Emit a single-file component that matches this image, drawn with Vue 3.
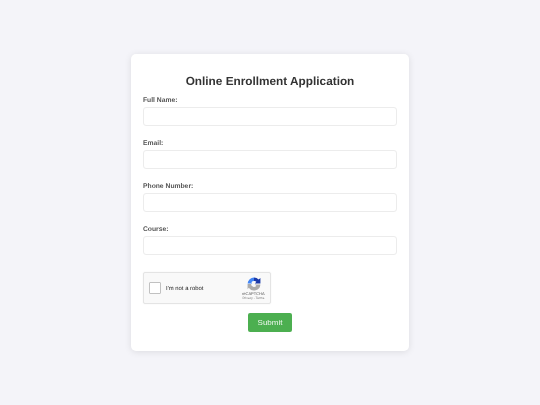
<template>
  <div class="page">
    <form class="card" @submit.prevent>
      <h1 class="title">Online Enrollment Application</h1>
      <div v-for="field in fields" :key="field" class="field">
        <label class="label">{{ field }}:</label>
        <input class="input" type="text" />
      </div>
      <div class="captcha">
        <span class="check"></span>
        <span class="robot">I'm not a robot</span>
        <div class="brand">
          <svg class="logo" viewBox="0 0 24 24" width="14" height="14">
            <path d="M12 1A11 11 0 0 1 20 4.4L23 1.5V11H13.5L16 8A5 5 0 0 0 12 7z" fill="#1c3aa9" />
            <path d="M12 1A11 11 0 0 0 1 11H9L7.5 9A6 6 0 0 1 12 7z" fill="#4285f4" />
            <path d="M1 12H7A5 5 0 0 0 16 15L13 13H23A11 11 0 0 1 3 18.5L1 21z" fill="#ababab" />
          </svg>
          <span class="name">reCAPTCHA</span>
          <span class="terms">Privacy - Terms</span>
        </div>
      </div>
      <button class="submit" type="submit"><span class="submit-text">Submit</span></button>
    </form>
  </div>
</template>

<script setup>
const fields = ['Full Name', 'Email', 'Phone Number', 'Course']
</script>

<style scoped>
.page {
  min-height: 405px;
  display: flex;
  align-items: center;
  justify-content: center;
  background: #f4f4f9;
  font-family: 'Liberation Sans', Arial, sans-serif;
  text-rendering: geometricPrecision;
}
.card {
  width: 254px;
  padding: 20px 12px 19px;
  background: #fff;
  border-radius: 5px;
  box-shadow: 0 1px 7px rgba(0, 0, 0, 0.1);
  display: flex;
  flex-direction: column;
}
.title {
  margin: 0 0 8px;
  font-size: 11.8px;
  line-height: 15px;
  font-weight: bold;
  color: #333;
  text-align: center;
  will-change: transform;
}
.field {
  display: flex;
  flex-direction: column;
  margin-bottom: 14px;
}
.label {
  font-size: 6.75px;
  line-height: 8px;
  font-weight: bold;
  color: #555;
  margin-bottom: 2px;
  will-change: transform;
}
.input {
  box-sizing: border-box;
  width: 100%;
  height: 19px;
  margin: 0;
  padding: 0 7px;
  border: 1px solid #ececec;
  border-radius: 3px;
  background: #fff;
  outline: none;
}
.captcha {
  box-sizing: border-box;
  width: 128px;
  height: 32px;
  margin: 3px 0 9px;
  padding: 0 5px;
  display: flex;
  align-items: center;
  background: #f9f9f9;
  border: 1px solid #e4e4e4;
  border-radius: 2px;
  box-shadow: 0 0 2px rgba(0, 0, 0, 0.06);
}
.check {
  box-sizing: border-box;
  width: 12px;
  height: 12px;
  background: #fff;
  border: 1px solid #c1c1c1;
  border-radius: 1px;
  flex: none;
}
.robot {
  margin: 1px 0 0 5px;
  font-size: 5.9px;
  color: #222;
  flex: 1;
  will-change: transform;
}
.brand {
  display: flex;
  flex-direction: column;
  align-items: center;
  margin-top: 1px;
  line-height: 5px;
  color: #555;
  will-change: transform;
}
.logo {
  margin-left: 1px;
}
.name {
  font-size: 4px;
}
.terms {
  color: #777;
  font-size: 3.2px;
}
.submit {
  align-self: center;
  width: 44px;
  height: 19px;
  padding: 0;
  border: none;
  border-radius: 2px;
  background: #4caf50;
  color: rgba(255, 255, 255, 0.9);
  font-family: inherit;
  font-size: 8px;
  cursor: pointer;
}
.submit-text {
  display: block;
  will-change: transform;
}
</style>
